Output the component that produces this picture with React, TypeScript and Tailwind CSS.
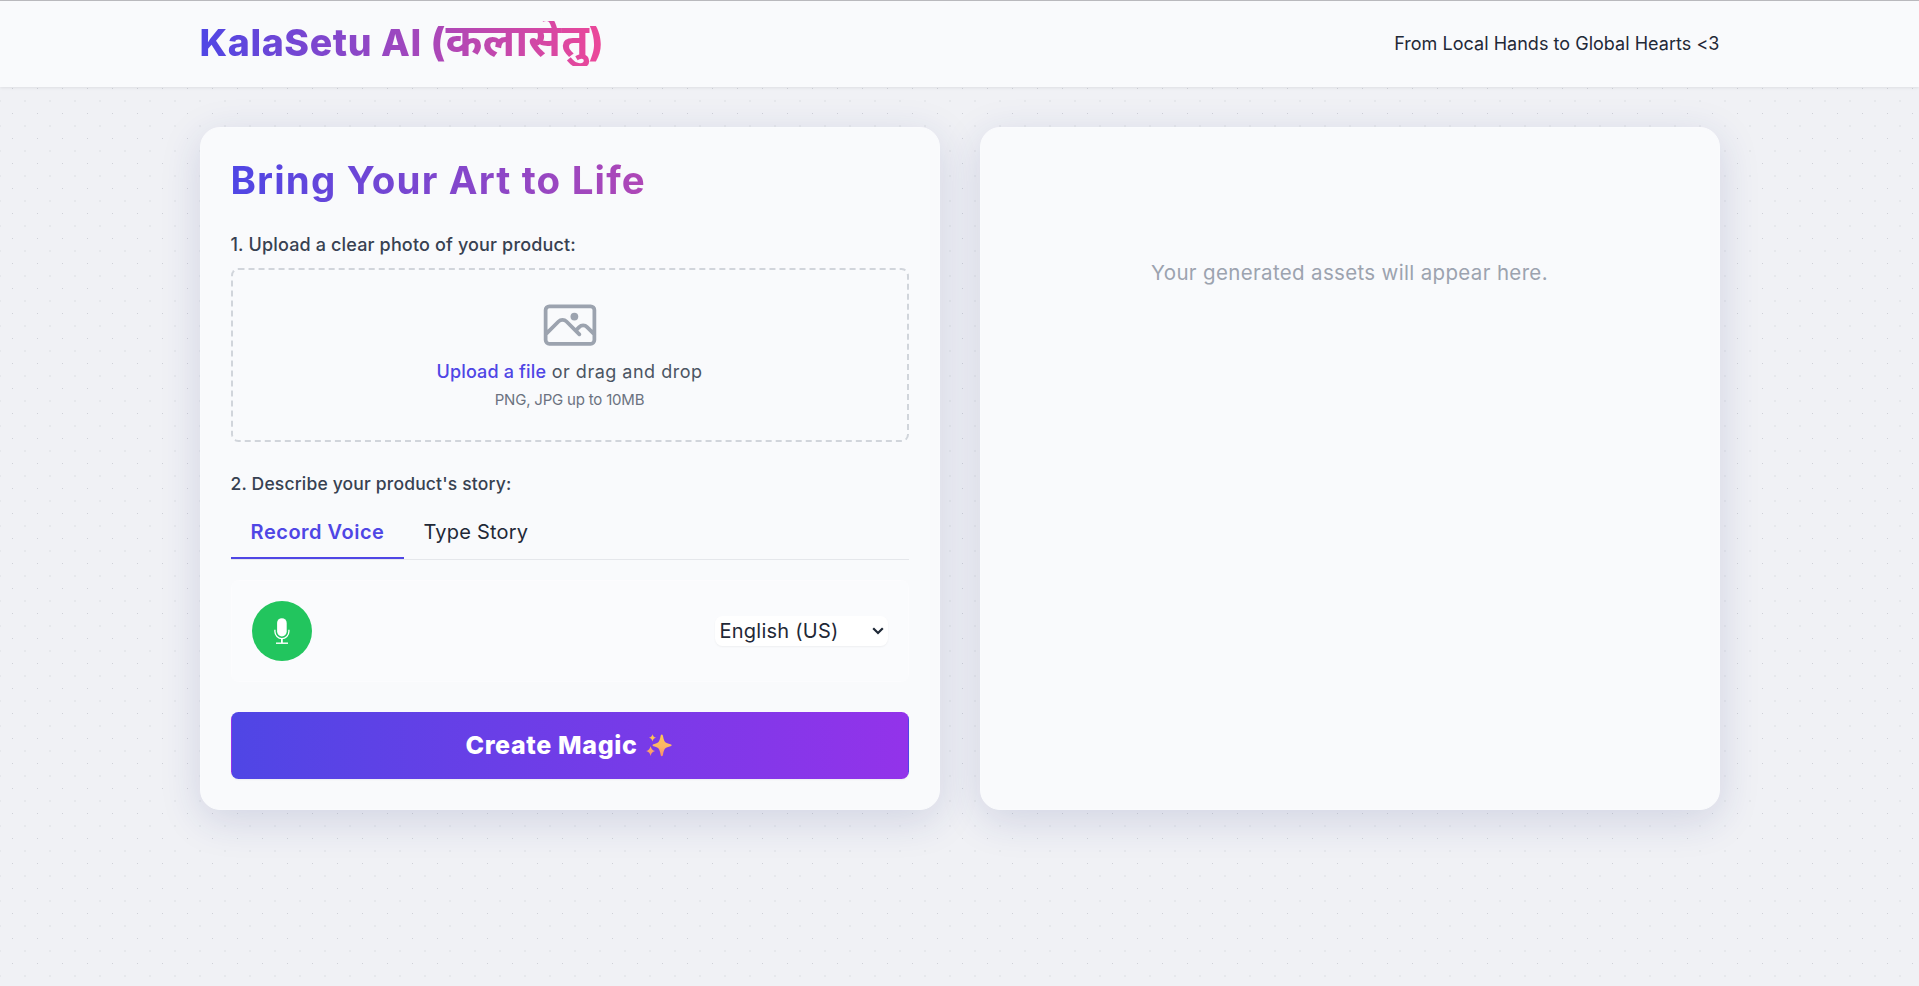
import type { ReactNode } from "react";

function Card({ children }: { children?: ReactNode }) {
  return (
    <section className="min-h-[683px] flex-1 rounded-[20px] border border-[#fafbfd] bg-[#f9fafc] p-[30px] shadow-[0_10px_40px_rgba(31,44,128,0.15)]">
      {children}
    </section>
  );
}

function PhotoIcon() {
  return (
    <svg className="size-[60px] text-[#9ca3af]" viewBox="0 0 24 24" fill="none" stroke="currentColor" strokeWidth="1.5" strokeLinecap="round" strokeLinejoin="round">
      <path d="m2.25 15.75 5.159-5.159a2.25 2.25 0 0 1 3.182 0l5.159 5.159m-1.5-1.5 1.409-1.409a2.25 2.25 0 0 1 3.182 0l2.909 2.909m-18 3.75h16.5a1.5 1.5 0 0 0 1.5-1.5V6a1.5 1.5 0 0 0-1.5-1.5H3.75A1.5 1.5 0 0 0 2.25 6v12a1.5 1.5 0 0 0 1.5 1.5Z" />
      <circle cx="13.75" cy="8.6" r="1.55" fill="currentColor" stroke="none" />
    </svg>
  );
}

function MicIcon() {
  return (
    <svg className="h-[26px] w-4" viewBox="0 0 16 26" fill="none" stroke="#fff">
      <rect x="3.1" y="0.2" width="9.6" height="18.2" rx="4.8" fill="#fff" stroke="none" />
      <path d="M0.9 11.8v1.8a7 7 0 0 0 14 0v-1.8" strokeWidth="1.3" />
      <path d="M7.9 20.6v4.4" strokeWidth="1.8" />
      <path d="M2 25.2h12" strokeWidth="1.4" />
    </svg>
  );
}

function Sparkles() {
  return (
    <svg className="mr-[2px] ml-[8px] h-[23px] w-[26px]" viewBox="0 0 26 23">
      <defs>
        <linearGradient id="spark" gradientUnits="userSpaceOnUse" x1="0" y1="0" x2="0" y2="23">
          <stop offset="0" stopColor="#fdc84f" />
          <stop offset="0.55" stopColor="#fcb567" />
          <stop offset="1" stopColor="#f98a6c" />
        </linearGradient>
      </defs>
      <g fill="url(#spark)">
        <path d="M15.8.4c.9 0 1 .7 1.3 2.2.9 4.8 1.8 6.4 6.5 7.5 1.4.3 2 .5 2 1.2s-.6 1-2 1.3c-4.7 1.1-5.6 2.6-6.5 7.4-.3 1.5-.4 2.2-1.3 2.2s-1-.7-1.3-2.2c-.9-4.8-1.8-6.3-6-7.4-1.4-.3-1.9-.6-1.9-1.3s.5-.9 1.9-1.2c4.2-1.1 5.1-2.7 6-7.5.3-1.5.4-2.2 1.3-2.2Z" />
        <path d="M6.5.3c.6 1.9 1.2 2.8 3.5 3.5-2.3.7-2.9 1.6-3.5 3.7-.6-2.1-1.2-3-3.5-3.7 2.3-.7 2.9-1.6 3.5-3.5Z" />
        <path d="M4.600 12.200c.8 2.700 1.600 4 4.500 4.900-2.900.9-3.700 2.100-4.500 5-.8-2.900-1.600-4.100-4.500-5 2.900-.9 3.700-2.200 4.500-4.900Z" />
      </g>
    </svg>
  );
}

export default function App() {
  return (
    <div className="min-h-[986px] border-t border-[#bcbcc0] bg-[#f0f1f5] bg-[radial-gradient(circle_at_12.5px_12.5px,#cfd1d8_0.8px,transparent_0.9px),radial-gradient(circle_at_0_0,#e6e8ec_1.2px,transparent_1.3px),radial-gradient(circle_at_25px_0,#e6e8ec_1.2px,transparent_1.3px),radial-gradient(circle_at_0_25px,#e6e8ec_1.2px,transparent_1.3px),radial-gradient(circle_at_25px_25px,#e6e8ec_1.2px,transparent_1.3px)] bg-size-[25px_25px] font-['Inter',sans-serif] text-[#1f2937]">
      <header className="bg-[#f9fafc] shadow-[0_1px_3px_rgba(0,0,0,0.08)]">
        <div className="mx-auto flex h-[86px] w-[1520px] items-center justify-between pb-[1px]">
          <h1 className="h-[45px] w-[403px] bg-linear-to-r/srgb from-[#4f46e5] to-[#ec4899] bg-clip-text text-[37.5px] leading-[44px] font-extrabold whitespace-nowrap text-transparent">
            <span className="tracking-[0.6px]">KalaSetu AI </span>
            <span className="text-[39px] leading-[0]">(</span>
            <span className="font-['Noto_Sans',sans-serif] text-[44.5px] leading-[0] font-bold">कलासेतु</span>
            <span className="text-[39px] leading-[0]">)</span>
          </h1>
          <p className="pb-[1px] text-[18px] leading-[25px] tracking-[0.03px]">From Local Hands to Global Hearts &lt;3</p>
        </div>
      </header>

      <main className="mx-auto flex w-[1520px] gap-10 pt-10">
        <Card>
          <h2 className="bg-linear-to-r/srgb from-[#4f46e5] to-[#ec4899] bg-clip-text text-[38.5px] leading-[45px] font-bold tracking-[1.15px] text-transparent">
            Bring Your Art to Life
          </h2>

          <p className="mt-[29px] pb-px text-[18px] leading-[25px] font-medium tracking-[0.15px] text-[#374151]">
            1. Upload a clear photo of your product:
          </p>
          <div className="mt-[10px] flex flex-col items-center rounded-[7.5px] border-2 border-dashed border-[#d1d5db] pt-[25px] pb-[30px]">
            <PhotoIcon />
            <p className="mt-1 pb-px text-[18px] leading-[25px] text-[#4b5563]">
              <span className="font-medium tracking-[0.15px] text-[#4f46e5]">Upload a file</span>
              <span className="tracking-[0.5px]"> or drag and drop</span>
            </p>
            <p className="mt-[5px] text-[15px] leading-5 tracking-[-0.2px] text-[#6b7280]">PNG, JPG up to 10MB</p>
          </div>

          <p className="mt-[29px] pb-px text-[17.5px] leading-[25px] font-medium tracking-[0.17px] text-[#374151]">
            2. Describe your product's story:
          </p>
          <div className="mt-[10px] flex border-b border-[#e5e7eb] text-[20px] leading-[30px]">
            <button className="w-[173px] border-b-2 border-[#4f46e5] py-[10px] pl-px font-semibold tracking-[0.5px] text-[#4f46e5]">
              Record Voice
            </button>
            <button className="px-5 pt-[10px] pb-[12px] tracking-[0.2px]">Type Story</button>
          </div>

          <div className="mt-5 flex items-center justify-between rounded-[7.5px] border border-[#fcfcfe] bg-[#fafbfd] p-5">
            <button aria-label="Record" className="flex size-[60px] items-center justify-center rounded-full bg-[#22c55e]">
              <MicIcon />
            </button>
            <div className="flex h-[30px] w-[173px] items-center rounded-[7.5px] bg-white pr-[4px] pl-[5px] text-[20px] tracking-[0.25px] shadow-[0_1px_2px_rgba(0,0,0,0.05)]">
              <span className="flex-1">English (US)</span>
              <svg className="h-[8px] w-[12px]" viewBox="0 0 12 8" fill="none" stroke="#1f2937" strokeWidth="2.2">
                <path d="M1.2 1.2 6 6l4.8-4.8" />
              </svg>
            </div>
          </div>

          <button className="mt-[30px] flex w-full items-center justify-center rounded-[7.5px] border border-transparent bg-linear-to-r/srgb from-[#4f46e5] to-[#9333ea] py-[15px] text-[25px] leading-[35px] font-extrabold text-white shadow-[0_1px_2px_rgba(0,0,0,0.05)]">
            <span className="tracking-[0.65px]">Create Magic</span>
            <Sparkles />
          </button>
        </Card>

        <Card>
          <p className="mt-[100px] text-center text-[20.5px] leading-[30px] tracking-[0.34px] text-[#9ca3af]">
            Your generated assets will appear here.
          </p>
        </Card>
      </main>
    </div>
  );
}
